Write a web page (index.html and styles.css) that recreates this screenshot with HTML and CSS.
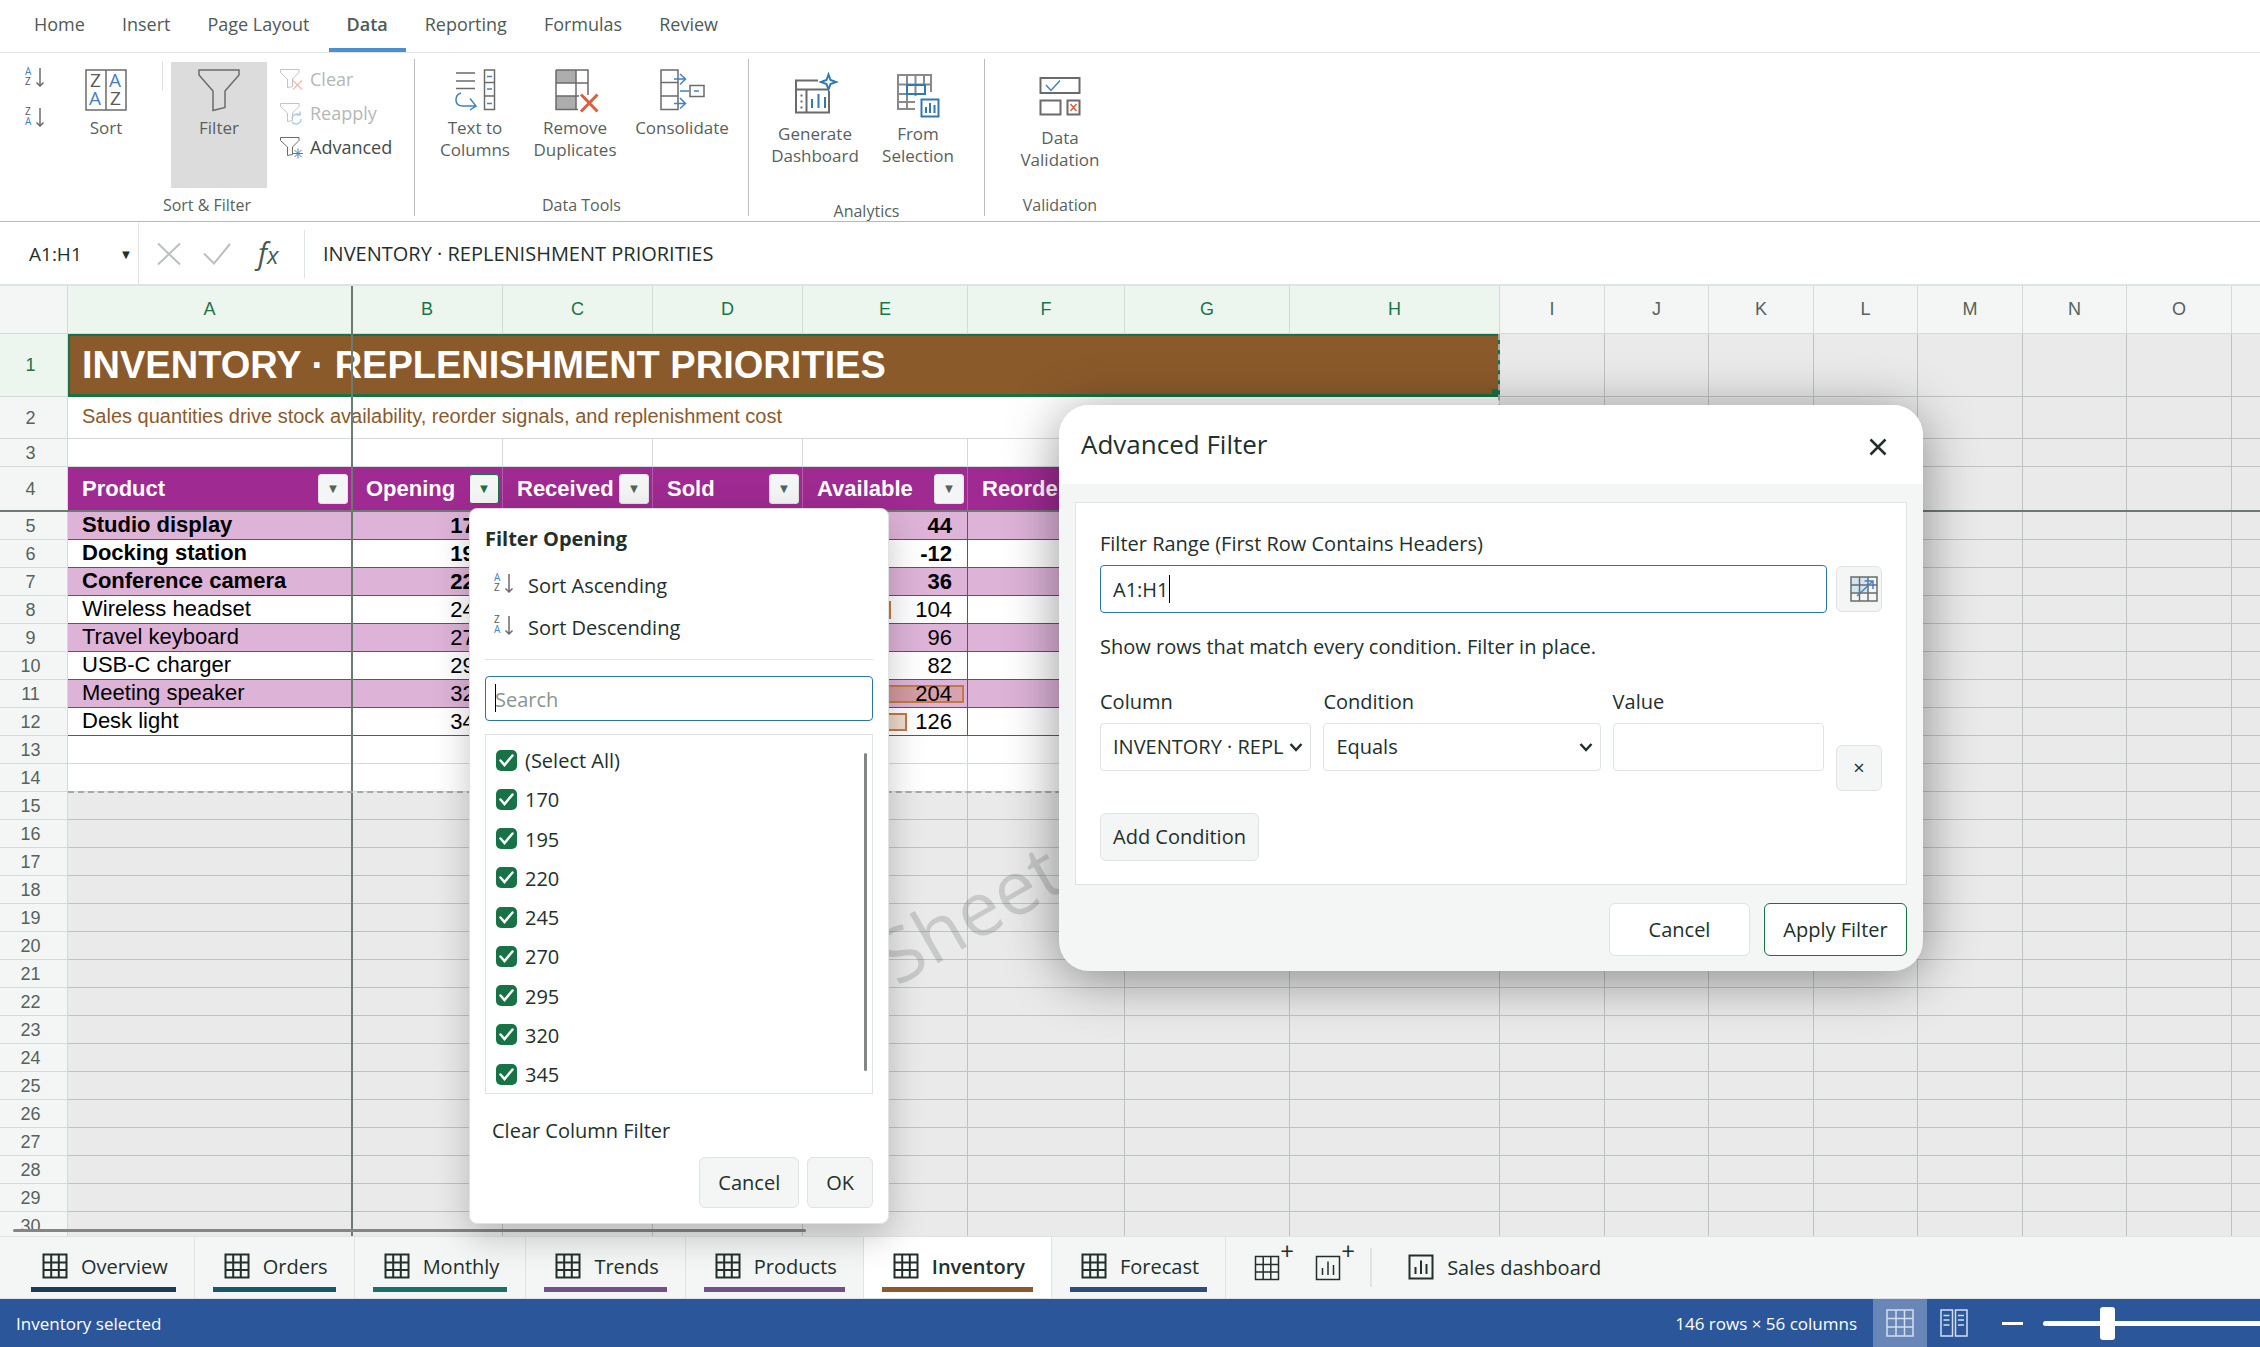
FILE: index.html
```html
<!DOCTYPE html>
<html lang="en">
<head>
<meta charset="utf-8">
<title>Inventory</title>
<link rel="stylesheet" href="styles.css">
</head>
<body>
<svg class="sprite" aria-hidden="true">
  <symbol id="i-az" viewBox="0 0 20 20"><text x="0" y="8" class="ic-a">A</text><text x="0" y="18" class="ic-z">Z</text><path class="g" d="M15 1v18M11.500 15.500l3.500 3.500 3.500-3.500"/></symbol>
  <symbol id="i-za" viewBox="0 0 20 20"><text x="0" y="8" class="ic-z">Z</text><text x="0" y="18" class="ic-a">A</text><path class="g" d="M15 1v18M11.500 15.500l3.500 3.500 3.500-3.500"/></symbol>
  <symbol id="i-funnel" viewBox="0 0 24 24"><path class="g g-thin" d="M.5 2.500h18.500v3l-6.500 6.500v7.500l-5 1V12L.5 5.500z"/></symbol>
  <symbol id="i-grid" viewBox="0 0 26 26"><path d="M1.500 1.500h23v23h-23zM1.500 9.500h23M1.500 17h23M9.200 1.500v23M16.800 1.500v23"/></symbol>
  <symbol id="i-chart" viewBox="0 0 26 26"><path d="M1.500 1.500h23v23h-23zM7.500 13v7M13 6.500V20M18.500 10v10"/></symbol>
</svg>

<nav class="tabs">
  <button class="tab">Home</button>
  <button class="tab">Insert</button>
  <button class="tab">Page Layout</button>
  <button class="tab tab-active">Data</button>
  <button class="tab">Reporting</button>
  <button class="tab">Formulas</button>
  <button class="tab">Review</button>
</nav>

<div class="ribbon">
  <section class="group group-sort">
    <div class="items">
      <div class="mini">
        <button class="mini-btn" aria-label="Sort ascending"><svg class="i20"><use href="#i-az"/></svg></button>
        <button class="mini-btn" aria-label="Sort descending"><svg class="i20"><use href="#i-za"/></svg></button>
      </div>
      <button class="big big-sort">
        <svg class="i42" viewBox="0 0 42 42"><path class="g" d="M1 1h40v40H1zM21 1v40"/><g class="za"><text x="5" y="18" class="z">Z</text><text x="24" y="18" class="a">A</text><text x="4" y="36" class="a">A</text><text x="25" y="36" class="z">Z</text></g></svg>
        <span>Sort</span>
      </button>
      <span class="tick"></span>
      <button class="big big-filter">
        <svg class="i42" viewBox="0 0 42 42"><path class="g" d="M1 1h40v5L27 22v16.500L15 41.500V22L1 6z"/></svg>
        <span>Filter</span>
      </button>
      <div class="lines">
        <button class="line" disabled><svg class="i24" viewBox="0 0 24 24"><use href="#i-funnel"/><path class="r" d="M13 13.500l9 9M22 13.500l-9 9"/></svg>Clear</button>
        <button class="line" disabled><svg class="i24" viewBox="0 0 24 24"><use href="#i-funnel"/><path class="b" d="M12 18a5 5 0 0 1 8-4M20 10.500V14h-3.500M21 18a5 5 0 0 1-9 3"/></svg>Reapply</button>
        <button class="line"><svg class="i24" viewBox="0 0 24 24"><use href="#i-funnel"/><path class="b g-thin" d="M18 13.500v10M13 18.500h10M14.500 15l7 7M21.500 15l-7 7"/></svg>Advanced</button>
      </div>
    </div>
    <div class="group-label">Sort &amp; Filter</div>
  </section>

  <section class="group group-tools">
    <div class="items">
      <button class="big">
        <svg class="i42" viewBox="0 0 42 42"><path class="g" d="M2 4h19M2 12h19M2 19.500h19M30.500 1h10v39.500h-10zM30.500 13.500h10M30.500 27h10"/><path class="b" d="M33 7.500h5M33 20h5M33 34.500h5M7 24a7 7 0 0 0-5 7c0 4 3 6 7 6h13M16 29.500l6 7.500-6 4"/></svg>
        <span>Text to<br>Columns</span>
      </button>
      <button class="big">
        <svg class="i42" viewBox="0 0 42 42"><path fill="#adadad" d="M2 1h20v13H2zM2 27h20v13.500H2z"/><path class="g" d="M2 1h32v25M2 1v39.500h22M22 1v39.500M2 14h32M2 27h23"/><path class="r r-bold" d="M27 25.500l16.500 17M43.500 25.500L27 42.500"/></svg>
        <span>Remove<br>Duplicates</span>
      </button>
      <button class="big big-wide">
        <svg class="i42" viewBox="0 0 42 42"><path class="g" d="M0 1h17v39.500H0zM0 13.500h17M0 27h17M29 16.500h14v11H29z"/><path class="b" d="M13 10h11M19 5l5.500 5-5.500 5.500M13 34.500h11M19 29l5.500 5.500-5.500 5M19 22h9M33 22h5"/></svg>
        <span>Consolidate</span>
      </button>
    </div>
    <div class="group-label">Data Tools</div>
  </section>

  <section class="group group-analytics">
    <div class="items">
      <button class="big">
        <svg class="i42" viewBox="0 0 42 42"><path class="g g-bold" d="M24 5.500H2v32h33V16M2 14.500h33M12.500 14.500v23M7.500 19.500v2M7.500 25.500v2M7.500 31.500v2"/><path class="bd" d="M18 24v9M24.500 19v14M31 22v11M34.500-.500l2 5.500 5.500 2-5.500 2-2 5.500-2-5.500-5.500-2 5.500-2z"/></svg>
        <span>Generate<br>Dashboard</span>
      </button>
      <button class="big">
        <svg class="i42" viewBox="0 0 42 42"><path class="g gl" d="M34 17V0H1v34h17M1 9.500h33M1 19h20M1 27h17M10 0v34M18.500 0v21M27 0v9.500"/><path class="bd" d="M10 10h18v9H10zM24.500 24.500h17v17h-17zM29 32v6M33 28v10M37.500 30v8"/></svg>
        <span>From<br>Selection</span>
      </button>
    </div>
    <div class="group-label">Analytics</div>
  </section>

  <section class="group group-valid">
    <div class="items">
      <button class="big">
        <svg class="i42" viewBox="0 0 42 42"><path class="g g-bold" d="M1.500 1h39v15h-39zM1.500 23.500h20v14h-20zM28.500 23.500h12v14h-12z"/><path class="b" d="M7 8l5 5.500L21 3.500"/><path class="r" d="M31.500 27l6 7M37.500 27l-6 7"/></svg>
        <span>Data<br>Validation</span>
      </button>
    </div>
    <div class="group-label">Validation</div>
  </section>
</div>

<div class="formula">
  <div class="namebox"><input class="name-input" aria-label="Name box" value="A1:H1"><button class="name-drop" aria-label="Names">▼</button></div>
  <button class="fbtn" aria-label="Cancel edit"><svg class="i24" viewBox="0 0 24 24"><path class="mute" d="M1 1.500l22 21M23 1.500l-22 21"/></svg></button>
  <button class="fbtn fbtn-check" aria-label="Accept edit"><svg class="i28" viewBox="0 0 28 24"><path class="mute" d="M1 11.500l10 10L27 2"/></svg></button>
  <button class="fbtn fx" aria-label="Insert function"><i>f<small>x</small></i></button>
  <input class="formula-input" aria-label="Formula" value="INVENTORY · REPLENISHMENT PRIORITIES">
</div>

<main class="sheet">
  <table class="grid" id="grid"></table>
  <div class="watermark">Sheet</div>
  <div class="freeze-v"></div>
  <div class="freeze-h"></div>
  <div class="page-edge"></div>
  <div class="hscroll"></div>
</main>

<footer class="sheet-tabs">
  <button class="stab"><span class="stab-in c-navy"><svg class="i26"><use href="#i-grid"/></svg>Overview</span></button>
  <button class="stab"><span class="stab-in c-teal"><svg class="i26"><use href="#i-grid"/></svg>Orders</span></button>
  <button class="stab"><span class="stab-in c-green"><svg class="i26"><use href="#i-grid"/></svg>Monthly</span></button>
  <button class="stab"><span class="stab-in c-purple"><svg class="i26"><use href="#i-grid"/></svg>Trends</span></button>
  <button class="stab"><span class="stab-in c-purple"><svg class="i26"><use href="#i-grid"/></svg>Products</span></button>
  <button class="stab stab-active"><span class="stab-in c-brown"><svg class="i26"><use href="#i-grid"/></svg>Inventory</span></button>
  <button class="stab"><span class="stab-in c-blue"><svg class="i26"><use href="#i-grid"/></svg>Forecast</span></button>
  <div class="adders">
    <button class="adder" aria-label="New sheet"><svg class="i26"><use href="#i-grid"/></svg><b>+</b></button>
    <button class="adder" aria-label="New dashboard"><svg class="i26"><use href="#i-chart"/></svg><b>+</b></button>
  </div>
  <button class="dash"><svg class="i26"><use href="#i-chart"/></svg>Sales dashboard</button>
</footer>

<div class="status">
  <span>Inventory selected</span>
  <div class="status-right">
    <span class="dims">146 rows × 56 columns</span>
    <button class="view view-on" aria-label="Normal view"><svg class="i28" viewBox="0 0 28 28"><path d="M1 1h26v26H1zM1 9.500h26M1 18h26M10 1v26M18.500 1v26"/></svg></button>
    <button class="view" aria-label="Page view"><svg class="i28" viewBox="0 0 28 28"><path d="M1 1h11.500v26H1zM15.500 1H27v26H15.500zM3.500 6.500h6M3.500 11h6M3.500 16h6M18 6.500h6M18 11h6M18 16h6"/></svg></button>
    <button class="minus" aria-label="Zoom out"></button>
    <input class="zoom" type="range" aria-label="Zoom" min="0" max="100" value="20">
  </div>
</div>

<div class="popup" role="dialog" aria-label="Filter Opening">
  <h2 class="popup-title">Filter Opening</h2>
  <button class="sort-row"><svg class="i20"><use href="#i-az"/></svg>Sort Ascending</button>
  <button class="sort-row"><svg class="i20"><use href="#i-za"/></svg>Sort Descending</button>
  <hr class="rule">
  <div class="search-wrap"><input class="search" type="text" placeholder="Search" aria-label="Search"><span class="caret"></span></div>
  <div class="checks">
    <label class="check"><input type="checkbox" checked>(Select All)</label>
    <label class="check"><input type="checkbox" checked>170</label>
    <label class="check"><input type="checkbox" checked>195</label>
    <label class="check"><input type="checkbox" checked>220</label>
    <label class="check"><input type="checkbox" checked>245</label>
    <label class="check"><input type="checkbox" checked>270</label>
    <label class="check"><input type="checkbox" checked>295</label>
    <label class="check"><input type="checkbox" checked>320</label>
    <label class="check"><input type="checkbox" checked>345</label>
    <span class="vscroll"></span>
  </div>
  <button class="clear">Clear Column Filter</button>
  <div class="popup-actions"><button class="btn">Cancel</button><button class="btn">OK</button></div>
</div>

<div class="dialog" role="dialog" aria-label="Advanced Filter">
  <header class="dialog-head"><h2>Advanced Filter</h2><button class="close" aria-label="Close"><svg class="i18" viewBox="0 0 18 18"><path d="M1.500 1.500l15 15M16.500 1.500l-15 15"/></svg></button></header>
  <div class="dialog-body">
    <div class="panel">
      <label class="lbl" for="range">Filter Range (First Row Contains Headers)</label>
      <div class="range-row">
        <div class="range-wrap"><input class="field field-focus" id="range" type="text" value="A1:H1"><span class="caret caret-end"></span></div>
        <button class="btn sq sq-pick" aria-label="Pick range"><svg class="i28" viewBox="0 0 28 26"><path fill="#cfe6f5" d="M2 1h16v15H2z"/><path class="g" d="M1 1h26v24H1zM1 9h26M1 17h26M9.500 1v24M18 1v24"/><path class="b" d="M7 20L23 5M14.500 5H23v8"/></svg></button>
      </div>
      <p class="note">Show rows that match every condition. Filter in place.</p>
      <div class="cond">
        <div class="cond-cell"><label class="lbl" for="col">Column</label><select class="field" id="col"><option>INVENTORY · REPLENISHMENT PRIORITIES</option></select></div>
        <div class="cond-cell"><label class="lbl" for="op">Condition</label><select class="field" id="op"><option>Equals</option></select></div>
        <div class="cond-cell"><label class="lbl" for="val">Value</label><input class="field" id="val" type="text"></div>
        <button class="btn sq sq-x" aria-label="Remove condition">×</button>
      </div>
      <button class="btn add">Add Condition</button>
    </div>
    <div class="dialog-actions"><button class="btn btn-white btn-cancel">Cancel</button><button class="btn btn-white btn-apply">Apply Filter</button></div>
  </div>
</div>
<script src="grid.js"></script>
</body>
</html>
```
FILE: styles.css
```css
* { box-sizing: border-box; }
body { margin: 0; height: 100vh; display: flex; flex-direction: column; overflow: hidden; position: relative; background: #fff; color: #22302b; font: 20px/28px "Open Sans", "Noto Sans", sans-serif; }
button, input, select { font: inherit; color: inherit; }
button { border: 0; background: none; padding: 0; }
h2, p { margin: 0; }
svg { display: block; fill: none; overflow: visible; flex: none; }
.sprite { position: absolute; width: 0; height: 0; }
.i18 { width: 18px; height: 18px; }
.i20 { width: 20px; height: 20px; }
.i24 { width: 24px; height: 24px; }
.i26 { width: 26px; height: 26px; stroke: #22302b; stroke-width: 2; }
.i28 { width: 28px; height: 28px; }
.i42 { width: 42px; height: 42px; }
.g { stroke: #6b6b6b; stroke-width: 1.500; }
.g-bold { stroke-width: 2; }
.gl { stroke: #8a8a8a; stroke-width: 2; }
.b { stroke: #4480c2; stroke-width: 1.500; }
.bd { stroke: #3478b0; stroke-width: 2; }
.g-thin { stroke-width: 1; }
.r { stroke: #d9603f; stroke-width: 1.500; }
.r-bold { stroke-width: 3; }
.mute { stroke: #b9c0bd; stroke-width: 2; }
.ic-a { font-size: 10px; fill: #4480c2; }
.ic-z { font-size: 10px; fill: #5a5a5a; }
.za { font-size: 19px; }
.za .a { fill: #4480c2; }
.za .z { fill: #5a5a5a; }

/* Ribbon tabs */
.tabs { flex: none; display: flex; gap: 1px; height: 53px; padding-left: 16px; border-bottom: 1px solid #dde4e1; font-size: 18px; color: #505a56; }
.tab { padding: 0 18px; height: 52px; border-bottom: 4px solid transparent; }
.tab-active { border-bottom-color: #4a90cf; font-weight: 600; }

/* Ribbon */
.ribbon { flex: none; display: flex; height: 169px; border-bottom: 1px solid #b5bab8; font-size: 17px; line-height: 22px; color: #5a5f5d; }
.group { margin: 6px 0 5px; padding-top: 3px; border-right: 1px solid #b9bebc; }
.items { display: flex; height: 126px; }
.group-label { margin-top: 5px; line-height: 24px; font-size: 16px; text-align: center; }
.group-sort { width: 415px; }
.group-sort .items { padding-left: 14px; }
.group-tools { width: 334px; padding-left: 10px; }
.group-tools .group-label { padding-right: 10px; }
.group-analytics { width: 236px; padding-top: 9px; }
.group-analytics .items { justify-content: center; gap: 3px; }
.group-valid { width: 150px; border-right: 0; }
.group-valid .items { justify-content: center; }
.group-valid .big { padding-top: 15px; gap: 8px; }
.mini { width: 40px; display: flex; flex-direction: column; gap: 20px; padding-top: 5px; }
.mini-btn { display: flex; padding-left: 11px; height: 20px; }
.big { width: 100px; display: flex; flex-direction: column; align-items: center; gap: 6px; padding-top: 7px; }
.big-wide { width: 114px; }
.big-sort { width: 72px; margin-left: 16px; }
.tick { width: 1px; height: 28px; background: #dcdfde; margin: 0 8px 0 20px; }
.big-filter { width: 96px; background: #dcdcdc; }
.lines { margin-left: 9px; display: flex; flex-direction: column; font-size: 18px; }
.line { display: flex; align-items: center; gap: 6px; height: 34px; padding-left: 4px; color: #444b48; }
.line:disabled { opacity: .4; }

/* Formula bar */
.formula { flex: none; display: flex; align-items: center; height: 64px; padding-top: 1px; border-bottom: 2px solid #dde4e1; }
.namebox { display: flex; align-items: center; width: 139px; height: 61px; padding-left: 29px; border-right: 1px solid #dde4e1; font-size: 19px; }
.name-input { width: 89px; border: 0; padding: 0; background: none; }
.name-drop { font-size: 13px; width: 16px; }
.fbtn { margin-left: 18px; }
.fbtn-check { margin-left: 22px; }
.fx { width: 47px; height: 48px; margin-left: 27px; text-align: left; border-right: 1px solid #dde4e1; font-size: 29px; color: #4a5a52; }
.fx small { font-size: 24px; }
.formula-input { flex: 1; border: 0; padding: 0 0 0 18px; }

/* Grid */
.sheet { flex: 1; min-height: 0; position: relative; overflow: hidden; background: #eaeaea; }
.grid { table-layout: fixed; border-collapse: separate; border-spacing: 0; width: 2337px; font: 22px/24px "Liberation Sans", Arial, sans-serif; color: #000; }
.grid th, .grid td { padding: 0; height: 28px; border-right: 1px solid #bcc4c1; border-bottom: 1px solid #bcc4c1; overflow: hidden; white-space: nowrap; }
.grid th { font-weight: 400; font-size: 18px; color: #54635c; background: #f4f6f5; border-color: #d3dbd8; }
.grid thead th { height: 48px; padding-bottom: 2px; }
.grid tbody th { padding-right: 6px; }
.grid .on { background: #ecf5ee; color: #1a7548; }
.grid .r1 td, .grid .r1 th { height: 63px; }
.grid .r2 td, .grid .r2 th { height: 42px; }
.grid .r4 td, .grid .r4 th { height: 45px; }
.grid .page { background: #fff; border-color: #d3dbd8; }
.grid .title { position: relative; background: #8b5a2b; color: #fff; font-size: 38px; line-height: 44px; font-weight: 700; padding-left: 12px; border: 2px solid #177245; border-bottom-width: 3px; }
.title::after { content: ""; position: absolute; right: 0; bottom: 0; width: 6px; height: 5px; background: #177245; }
.grid .sub { font-size: 20px; color: #8b5a2b; padding: 0 0 4px 14px; }
.grid .head { background: #9f2a91; color: #fff; font-weight: 700; border-right-color: #b35aa8; border-bottom: 0; }
.head-in { display: flex; align-items: center; justify-content: space-between; padding: 0 3px 1px 14px; }
.dd { flex: none; width: 30px; height: 30px; border: 1px solid #dde4e1; border-radius: 3px; background: #f4f6f5; color: #54635c; font-size: 13px; line-height: 28px; }
.dd-on { border-color: #177245; color: #177245; }
.grid .data { background: #fff; border-color: #9f2a91; }
.grid .band { background: #ddb3d8; }
.grid .strong { font-weight: 700; }
.grid .name { padding: 0 0 2px 14px; }
.grid .num { text-align: right; padding-right: 15px; position: relative; }
.bar { position: absolute; left: 1px; top: 5px; height: 18px; border: 2px solid #c17a44; background: linear-gradient(90deg, rgba(193, 110, 70, .6), rgba(193, 122, 68, .25)); }
.num span { position: relative; }
.freeze-v { position: absolute; left: 351px; top: 0; bottom: 0; width: 2px; background: #6b7b72; }
.freeze-h { position: absolute; left: 0; right: 0; top: 224px; height: 2px; background: #6b7b72; }
.page-edge { position: absolute; left: 68px; top: 48px; width: 1432px; height: 459px; border: 2px dashed #a6a9a8; border-width: 0 2px 2px 0; }
.hscroll { position: absolute; left: 13px; bottom: 4px; width: 793px; height: 3px; border-radius: 2px; background: #858585; }
.watermark { position: absolute; left: 897px; top: 621px; font-size: 75px; line-height: 102px; transform-origin: 0 80px; transform: rotate(-30deg); color: rgba(90, 100, 95, .24); }

/* Sheet tabs */
.sheet-tabs { flex: none; display: flex; height: 63px; padding-left: 13px; border-top: 1px solid #dde4e1; border-bottom: 1px solid #dde4e1; background: #f4f6f5; }
.stab { padding: 0 18px; border-right: 1px solid #dde4e1; display: flex; }
.stab-active { background: #fff; font-weight: 600; }
.stab-in { display: flex; align-items: center; gap: 13px; height: 55px; padding: 10px 8px 0 11px; border-bottom: 5px solid; }
.stab .i26 { margin-top: -3px; }
.c-navy { border-color: #1d3b57; }
.c-teal { border-color: #17586b; }
.c-green { border-color: #1a7265; }
.c-purple { border-color: #735087; }
.c-brown { border-color: #8b5a2b; }
.c-blue { border-color: #2f4c80; }
.adders { display: flex; gap: 35px; margin: 11px 0 0 28px; width: 118px; height: 39px; border-right: 2px solid #dde4e1; }
.adder { display: flex; align-items: flex-start; width: 26px; padding-top: 7px; }
.adder .i26 { stroke-width: 1.500; }
.adder b { font-size: 24px; font-weight: 400; line-height: 20px; margin-top: -14px; }
.dash { display: flex; align-items: center; gap: 13px; margin-left: 36px; }
.dash .i26 { margin-top: -2px; }

/* Status bar */
.status { flex: none; display: flex; align-items: center; justify-content: space-between; height: 48px; padding: 2px 0 0 16px; background: #2b579a; color: #fff; font-size: 17px; overflow: hidden; }
.status-right { display: flex; align-items: center; height: 48px; margin: -2px -83px 0 0; }
.dims { margin-right: 16px; padding-top: 2px; }
.view { width: 54px; height: 48px; display: flex; align-items: center; justify-content: center; }
.view svg { stroke: #d4deee; stroke-width: 1.500; }
.view-on { background: #6986b8; }
.minus { width: 21px; height: 3px; background: #fff; margin: 0 20px 0 21px; }
.zoom { appearance: none; width: 300px; height: 5px; margin: 0; border-radius: 3px; background: #fff; }
.zoom::-webkit-slider-thumb { appearance: none; width: 15px; height: 33px; border-radius: 3px; background: #fff; }

/* Shared controls */
.btn { border: 1px solid #dde4e1; border-radius: 6px; background: #f4f6f5; }
.btn-white { background: #fff; }
.caret { position: absolute; left: 10px; top: 8px; width: 1px; height: 28px; background: #000; }

/* Column filter popup */
.popup { position: absolute; left: 469px; top: 508px; width: 420px; padding: 15px; display: flex; flex-direction: column; border: 1px solid #dde4e1; border-radius: 8px; background: #fff; box-shadow: 0 12px 36px rgba(0, 0, 0, .22); }
.popup-title { font-size: 20px; line-height: 30px; font-weight: 700; }
.sort-row { display: flex; align-items: center; gap: 14px; height: 42px; padding-left: 9px; }
.popup-title + .sort-row { margin-top: 11px; }
.sort-row svg { margin-top: -6px; }
.rule { width: 100%; height: 1px; margin: 10px 0 16px; border: 0; background: #dde4e1; }
.search-wrap, .range-wrap { position: relative; }
.search { width: 100%; height: 45px; padding: 1px 9px 0; border: 1px solid #2f74a8; border-radius: 4px; outline: 0; }
.search::placeholder { color: #8b9490; }
.checks { position: relative; display: flex; flex-direction: column; justify-content: space-between; height: 360px; margin-top: 13px; padding: 12px 0 4px 10px; border: 1px solid #dde4e1; }
.check { display: flex; align-items: center; gap: 8px; }
.check input { appearance: none; width: 21px; height: 21px; margin: -2px 0 0; border-radius: 5px; background: #177245 url("data:image/svg+xml,%3Csvg xmlns='http://www.w3.org/2000/svg' viewBox='0 0 21 21'%3E%3Cpath d='M4.500 10.500l4 4.500 8-9.500' fill='none' stroke='white' stroke-width='2.500' stroke-linecap='round'/%3E%3C/svg%3E"); }
.vscroll { position: absolute; right: 5px; top: 18px; bottom: 22px; width: 3px; border-radius: 2px; background: #858585; }
.clear { margin: 23px 0 12px; padding-left: 7px; text-align: left; }
.popup-actions { display: flex; justify-content: flex-end; gap: 8px; }
.popup-actions .btn { height: 51px; padding: 0 18px; }

/* Advanced filter dialog */
.dialog { position: absolute; left: 1059px; top: 405px; width: 864px; border-radius: 30px; overflow: hidden; background: #f4f6f5; box-shadow: 0 8px 54px rgba(0, 0, 0, .42); }
.dialog-head { display: flex; align-items: center; justify-content: space-between; height: 79px; padding: 0 36px 2px 22px; background: #fff; }
.dialog-head h2 { font-size: 26px; font-weight: 400; }
.close svg { stroke: #22302b; stroke-width: 2.500; margin-top: 6px; }
.dialog-body { padding: 18px 16px 15px; }
.panel { padding: 27px 24px 23px; border: 1px solid #dde4e1; background: #fff; display: flex; flex-direction: column; align-items: flex-start; }
.lbl { display: block; }
.range-row { display: flex; align-items: center; gap: 9px; width: 100%; margin-top: 7px; }
.range-wrap { flex: 1; }
.field { width: 100%; height: 48px; padding: 0 12px; border: 1px solid #dde4e1; border-radius: 4px; background: #fff; outline: 0; }
select.field { appearance: none; padding: 0 26px 0 12px; background: #fff url("data:image/svg+xml,%3Csvg xmlns='http://www.w3.org/2000/svg' viewBox='0 0 14 10'%3E%3Cpath d='M1.500 2l5.500 6 5.500-6' fill='none' stroke='%2322302b' stroke-width='2.500'/%3E%3C/svg%3E") no-repeat right 7px center / 14px 10px; }
.field-focus { border-color: #2f74a8; }
.caret-end { left: 69px; top: 10px; }
.sq { width: 46px; height: 46px; display: flex; align-items: center; justify-content: center; }
.sq-pick { padding-left: 10px; }
.note { margin-top: 20px; }
.cond { display: grid; grid-template-columns: 212fr 278fr 212fr 46px; gap: 12px; width: 100%; margin-top: 27px; }
.cond-cell .field { margin-top: 7px; }
.sq-x { margin-top: 57px; }
.add { height: 48px; padding: 0 12px; margin-top: 22px; }
.dialog-actions { display: flex; justify-content: flex-end; gap: 14px; margin-top: 18px; }
.dialog-actions .btn { height: 53px; }
.btn-cancel { width: 141px; }
.btn-apply { width: 143px; border-color: #177245; }
```
FILE: grid.js
```js
const widths = [68, 284, 151, 150, 150, 165, 157, 165, 210, 105, 104, 105, 104, 105, 104, 105, 105];
const heads = ["Product", "Opening", "Received", "Sold", "Available", "Reorder", "Status", "Reorder cost"];
const items = [
  ["Studio display", 170, 44], ["Docking station", 195, -12], ["Conference camera", 220, 36],
  ["Wireless headset", 245, 104], ["Travel keyboard", 270, 96], ["USB-C charger", 295, 82],
  ["Meeting speaker", 320, 204], ["Desk light", 345, 126]
];
const bars = { 104: 87, 204: 160, 126: 103 };

let html = "<colgroup>" + widths.map(w => `<col style="width:${w}px">`).join("") + "</colgroup><thead><tr><th></th>";
for (let c = 0; c < 16; c++) html += `<th class="${c < 8 ? "on" : ""}">${c < 15 ? String.fromCharCode(65 + c) : ""}</th>`;
html += "</tr></thead><tbody>";
for (let r = 1; r <= 30; r++) {
  html += `<tr class="r${r}"><th class="${r === 1 ? "on" : ""}">${r}</th>`;
  let c = 0;
  if (r === 1) { html += '<td class="title" colspan="8">INVENTORY · REPLENISHMENT PRIORITIES</td>'; c = 8; }
  if (r === 2) { html += '<td class="page sub" colspan="8">Sales quantities drive stock availability, reorder signals, and replenishment cost</td>'; c = 8; }
  for (; c < 16; c++) {
    if (r === 4 && c < 8) {
      html += `<td class="head"><div class="head-in">${heads[c]}<button class="dd${c === 1 ? " dd-on" : ""}" aria-label="Filter ${heads[c]}">▼</button></div></td>`;
    } else if (r > 4 && r < 13 && c < 8) {
      const it = items[r - 5];
      const cls = "data" + (r % 2 ? " band" : "") + (r < 8 ? " strong" : "");
      if (c === 0) html += `<td class="${cls} name">${it[0]}</td>`;
      else if (c === 1) html += `<td class="${cls} num">${it[1]}</td>`;
      else if (c === 4) {
        const bar = bars[it[2]] ? `<i class="bar" style="width:${bars[it[2]]}px"></i>` : "";
        html += `<td class="${cls} num">${bar}<span>${it[2]}</span></td>`;
      } else html += `<td class="${cls}"></td>`;
    } else html += `<td class="${r < 15 && c < 8 ? "page" : ""}"></td>`;
  }
  html += "</tr>";
}
document.getElementById("grid").innerHTML = html + "</tbody>";
```
